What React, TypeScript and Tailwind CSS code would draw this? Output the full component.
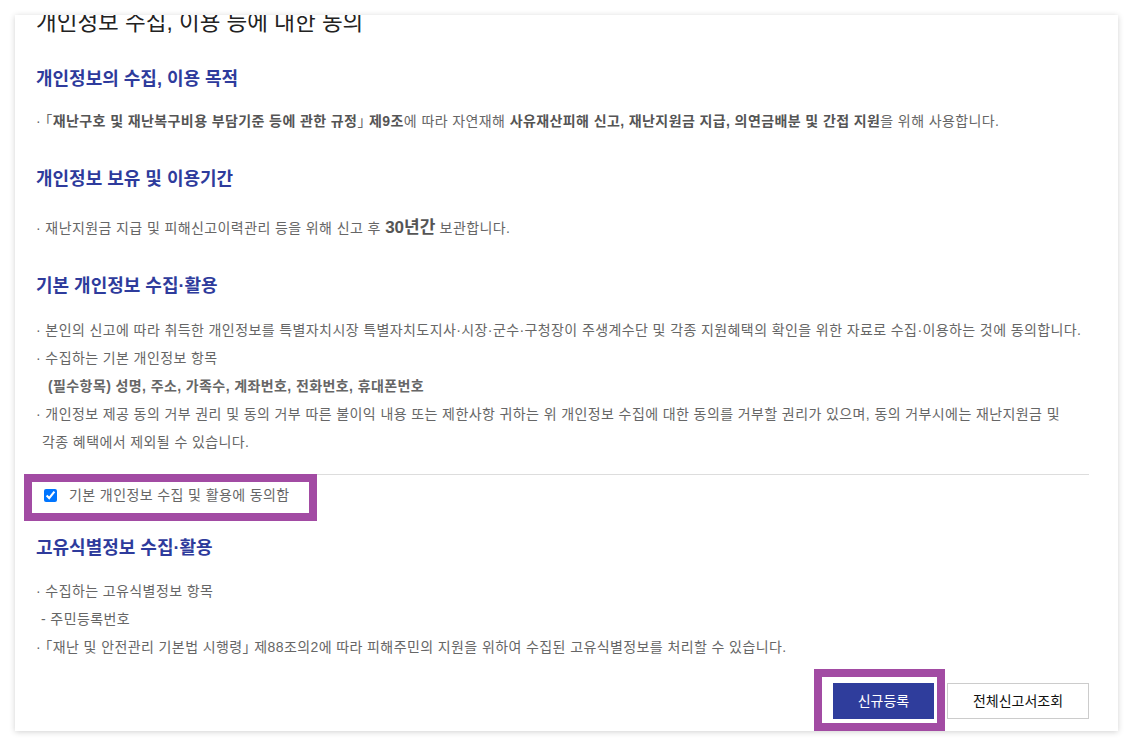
const font = { fontFamily: '"Liberation Sans", "Noto Sans CJK KR", sans-serif' };

const Heading = ({ children, className = "" }: { children: React.ReactNode; className?: string }) => (
  <h3 className={`text-[18px] font-bold leading-[24px] text-[#2e3b9c] ${className}`}>{children}</h3>
);

const Line = ({ children, className = "" }: { children: React.ReactNode; className?: string }) => (
  <p className={`text-[14px] leading-[28px] tracking-[0.4px] text-[#666] whitespace-nowrap ${className}`}>{children}</p>
);

// half-width CJK brackets
const Br = ({ children }: { children: React.ReactNode }) => (
  <span className="[font-feature-settings:'halt']">{children}</span>
);

export default function App() {
  return (
    <div className="min-h-screen bg-white pt-[15px] px-[15px]" style={font}>
      <div className="h-[716px] overflow-hidden bg-white shadow-[0_1px_6px_rgba(0,0,0,0.18)] pl-[21px] pr-[29px]">
        <h2 className="-mt-[7px] text-[22.5px] leading-[30px] text-[#222]">개인정보 수집, 이용 등에 대한 동의</h2>

        {/* 목적 */}
        <Heading className="mt-[29px]">개인정보의 수집, 이용 목적</Heading>
        <Line className="mt-[16px]">
          · <Br>「</Br><b className="text-[#555]">재난구호 및 재난복구비용 부담기준 등에 관한 규정</b><Br>」</Br> <b className="text-[#555]">제9조</b>에 따라 자연재해{" "}
          <b className="text-[#555]">사유재산피해 신고, 재난지원금 지급, 의연금배분 및 간접 지원</b>을 위해 사용합니다.
        </Line>

        {/* 보유기간 */}
        <Heading className="mt-[32px]">개인정보 보유 및 이용기간</Heading>
        <Line className="mt-[23px]">
          · 재난지원금 지급 및 피해신고이력관리 등을 위해 신고 후{" "}
          <b className="text-[17px] tracking-normal text-[#555]">30년간</b> 보관합니다.
        </Line>

        {/* 기본 개인정보 */}
        <Heading className="mt-[32px]">기본 개인정보 수집·활용</Heading>
        <div className="mt-[18px]">
          <Line>· 본인의 신고에 따라 취득한 개인정보를 특별자치시장 특별자치도지사·시장·군수·구청장이 주생계수단 및 각종 지원혜택의 확인을 위한 자료로 수집·이용하는 것에 동의합니다.</Line>
          <Line>· 수집하는 기본 개인정보 항목</Line>
          <Line className="pl-[12px] font-bold text-[#555]">(필수항목) 성명, 주소, 가족수, 계좌번호, 전화번호, 휴대폰번호</Line>
          <Line>· 개인정보 제공 동의 거부 권리 및 동의 거부 따른 불이익 내용 또는 제한사항 귀하는 위 개인정보 수집에 대한 동의를 거부할 권리가 있으며, 동의 거부시에는 재난지원금 및</Line>
          <Line className="pl-[6px]">각종 혜택에서 제외될 수 있습니다.</Line>
        </div>

        <div className="mt-[18px] border-t border-[#ddd]" />

        <div className="relative mt-[6px] flex h-[28px] items-center">
          <input type="checkbox" defaultChecked className="ml-[8px] h-[13px] w-[13px] accent-[#0075ff]" />
          <span className="ml-[12px] text-[14px] tracking-[0.4px] text-[#666]">기본 개인정보 수집 및 활용에 동의함</span>
          <div className="pointer-events-none absolute -left-[12px] -top-[7px] h-[47px] w-[293px] border-[8px] border-[#a24ba3]" />
        </div>

        {/* 고유식별정보 */}
        <Heading className="mt-[27px]">고유식별정보 수집·활용</Heading>
        <div className="mt-[17px]">
          <Line>· 수집하는 고유식별정보 항목</Line>
          <Line className="pl-[5px]">- 주민등록번호</Line>
          <Line>· <Br>「</Br>재난 및 안전관리 기본법 시행령<Br>」</Br> 제88조의2에 따라 피해주민의 지원을 위하여 수집된 고유식별정보를 처리할 수 있습니다.</Line>
        </div>

        <div className="mt-[22px] flex justify-end gap-[13px]">
          <div className="relative">
            <button className="h-[36px] w-[101px] bg-[#2f3d9c] text-[14px] text-white">신규등록</button>
            <div className="pointer-events-none absolute -left-[19px] -top-[14px] h-[62px] w-[131px] border-[8px] border-[#a24ba3]" />
          </div>
          <button className="h-[36px] w-[142px] border border-[#ccc] bg-white text-[14px] text-[#111]">전체신고서조회</button>
        </div>
      </div>
    </div>
  );
}
